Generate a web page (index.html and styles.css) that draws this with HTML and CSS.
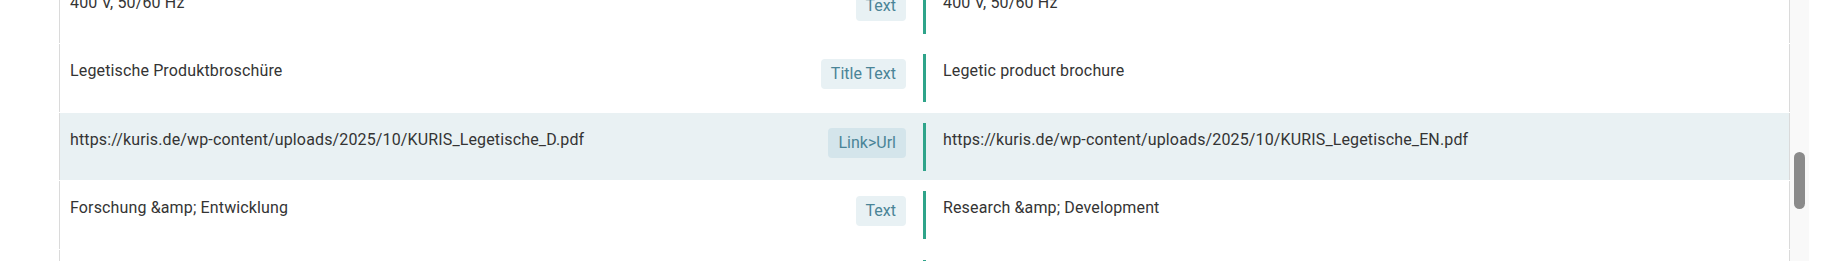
FILE: index.html
```html
<!DOCTYPE html>
<html lang="de">
<head>
<meta charset="utf-8">
<title>Translation rows</title>
<link rel="stylesheet" href="styles.css">
</head>
<body>
<div class="page">
  <main class="main">
    <div class="list">
      <div class="row">
        <div class="src">
          <span class="text">400 V, 50/60 Hz</span>
          <span class="badge">Text</span>
        </div>
        <div class="dst"><span class="text">400 V, 50/60 Hz</span></div>
      </div>
      <div class="row">
        <div class="src">
          <span class="text">Legetische Produktbroschüre</span>
          <span class="badge">Title Text</span>
        </div>
        <div class="dst"><span class="text">Legetic product brochure</span></div>
      </div>
      <div class="row row-active">
        <div class="src">
          <span class="text">https://kuris.de/wp-content/uploads/2025/10/KURIS_Legetische_D.pdf</span>
          <span class="badge">Link&gt;Url</span>
        </div>
        <div class="dst"><span class="text">https://kuris.de/wp-content/uploads/2025/10/KURIS_Legetische_EN.pdf</span></div>
      </div>
      <div class="row">
        <div class="src">
          <span class="text">Forschung &amp;amp; Entwicklung</span>
          <span class="badge">Text</span>
        </div>
        <div class="dst"><span class="text">Research &amp;amp; Development</span></div>
      </div>
      <div class="row">
        <div class="src">
          <span class="text"></span>
        </div>
        <div class="dst"><span class="text"></span></div>
      </div>
    </div>
  </main>
  <div class="scrolltrack"><div class="thumb"></div></div>
  <div class="spacer"></div>
</div>
</body>
</html>
```

FILE: styles.css
```css
html, body {
  margin: 0;
  padding: 0;
  background: #ffffff;
  overflow: hidden;
}
body {
  font-family: Roboto, "Liberation Sans", Arial, sans-serif;
  font-size: 16px;
  color: #343434;
}
.page {
  display: flex;
  height: 261px;
  overflow: hidden;
}
.main {
  flex: 0 0 1790px;
  padding-left: 59px;
  box-sizing: border-box;
}
.list {
  display: flex;
  flex-direction: column;
  gap: 1px;
  margin-top: -24.5px;
}
.row {
  display: grid;
  grid-template-columns: 863fr 866fr;
  height: 67.5px;
  box-sizing: border-box;
  padding: 10px 0 9.5px;
  border-left: 1px solid #dadada;
  border-right: 1px solid #dadada;
  background: #ffffff;
}
.row-active {
  background: #e9f1f3;
}
.src {
  display: flex;
  justify-content: space-between;
  align-items: flex-start;
  padding: 5px 17px 3px 10px;
  min-width: 0;
}
.dst {
  border-left: 3px solid #2fa48a;
  padding: 5px 10px 3px 17px;
  min-width: 0;
}
.text {
  line-height: 24px;
  white-space: nowrap;
  letter-spacing: 0.14px;
}
.badge {
  flex: none;
  padding: 5px 10px;
  line-height: 20px;
  border-radius: 4px;
  background: #e8f1f4;
  color: #4a8497;
}
.row-active .badge {
  background: #d4e5eb;
}
.scrolltrack {
  flex: 0 0 19px;
  background: #f9f9f9;
  padding: 152px 0 0 4px;
  box-sizing: border-box;
}
.thumb {
  width: 11px;
  height: 57px;
  border-radius: 6px;
  background: #8b8b8b;
}
.spacer {
  flex: 1;
  background: #ffffff;
}
```
